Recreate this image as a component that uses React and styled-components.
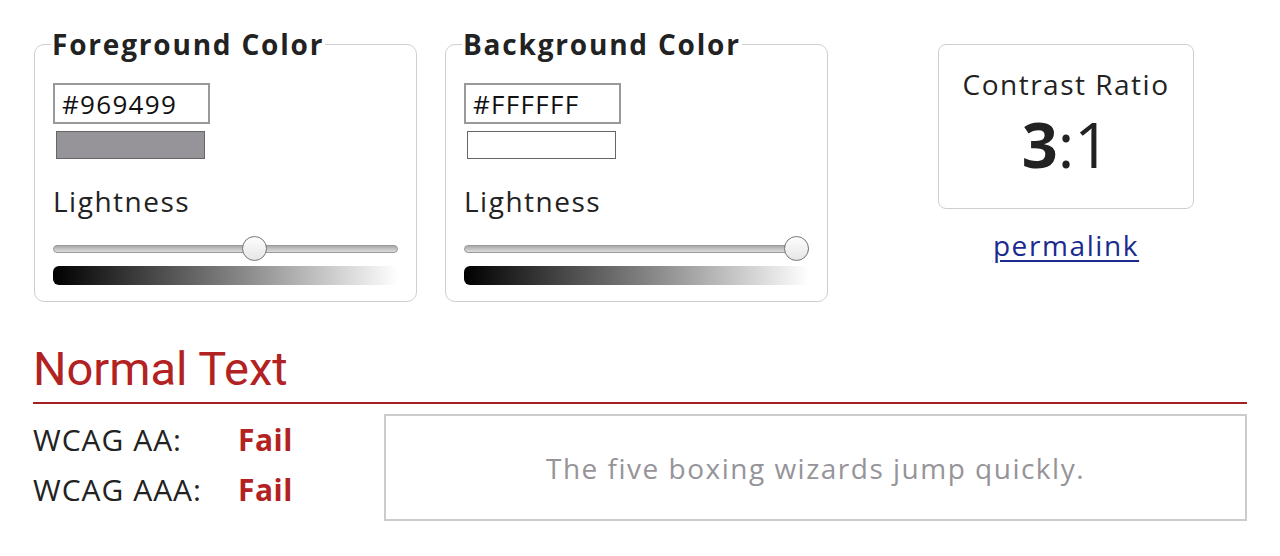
import React from "react";
import styled, { createGlobalStyle } from "styled-components";

const Global = createGlobalStyle`
  html, body { margin: 0; padding: 0; background: #fff; }
  body { font-family: "Open Sans", "Liberation Sans", sans-serif; color: #222; }
`;

const Page = styled.div`
  padding: 26px 33px 0 33px;
  width: 1280px;
  box-sizing: border-box;
`;

const Top = styled.div`
  display: flex;
  align-items: flex-start;
`;

const Panel = styled.fieldset`
  margin: 0 ${(p) => p.$gap || 0}px 0 1px;
  width: 383px;
  box-sizing: border-box;
  border: 1.5px solid #cfcfcf;
  border-radius: 10px;
  padding: 0 18px 16px 18px;
  min-width: 0;
`;

const Legend = styled.legend`
  font-size: 28px;
  font-weight: 700;
  letter-spacing: 1.8px;
  line-height: 36px;
  padding: 0 1px;
  margin-left: -2px;
  color: #222;
`;

const HexInput = styled.input`
  display: block;
  margin-top: 21px;
  width: 157px;
  height: 41px;
  box-sizing: border-box;
  border: 2px solid #999;
  padding: 0 0 0 7px;
  font-family: "Open Sans", "Liberation Sans", sans-serif;
  font-size: 26px;
  letter-spacing: 1.3px;
  color: #111;
  background: #fff;
  outline: none;
`;

const Swatch = styled.div`
  margin: 7px 0 0 3px;
  width: 149px;
  height: 28px;
  box-sizing: border-box;
  border: 1px solid #666;
  background: ${(p) => p.$color};
`;

const Label = styled.div`
  margin-top: 23px;
  font-size: 28px;
  letter-spacing: 1.5px;
  line-height: 38px;
  color: #222;
`;

const SliderWrap = styled.div`
  position: relative;
  margin-top: 16px;
  height: 25px;
  display: flex;
  align-items: center;
`;

const Track = styled.div`
  width: 100%;
  height: 8px;
  box-sizing: border-box;
  border-radius: 4px;
  border: 1px solid #999;
  background: linear-gradient(#aaa, #ddd);
`;

const Thumb = styled.div`
  position: absolute;
  top: 0;
  width: 25px;
  height: 25px;
  box-sizing: border-box;
  margin-left: -12.5px;
  border-radius: 50%;
  border: 1.5px solid #777;
  background: linear-gradient(#fdfdfd, #e6e6e6);
`;

const GradientBar = styled.div`
  margin-top: 5px;
  height: 19px;
  border-radius: 6px 0 0 6px;
  background: linear-gradient(to right, #000, #888 55%, #fff);
`;

const RatioCol = styled.div`
  margin-left: 110px;
  display: flex;
  flex-direction: column;
  align-items: center;
  padding-top: 18px;
`;

const RatioBox = styled.div`
  width: 256px;
  height: 165px;
  box-sizing: border-box;
  border: 1.5px solid #cfcfcf;
  border-radius: 8px;
  text-align: center;
  padding-top: 19px;
`;

const RatioTitle = styled.div`
  font-size: 28px;
  letter-spacing: 1.5px;
  line-height: 40px;
  color: #222;
`;

const RatioValue = styled.div`
  font-size: 63px;
  line-height: 80px;
  color: #222;
  b { font-weight: 700; }
`;

const Permalink = styled.a`
  margin-top: 17px;
  font-size: 28px;
  letter-spacing: 1.6px;
  line-height: 38px;
  color: #1a2a8f;
  text-decoration: underline;
  text-decoration-thickness: 2px;
  text-underline-offset: 4px;
`;

const Heading = styled.h2`
  margin: 38px 0 0 0;
  font-family: Roboto, "Open Sans", sans-serif;
  font-weight: 400;
  font-size: 47px;
  line-height: 58px;
  color: #b22222;
  border-bottom: 2px solid #a52024;
  padding-bottom: 4px;
`;

const Results = styled.div`
  display: flex;
  margin-top: 10px;
  align-items: flex-start;
`;

const Rows = styled.div`
  width: 351px;
  display: flex;
  flex-direction: column;
  padding-top: 1px;
`;

const Row = styled.div`
  display: flex;
  font-size: 30px;
  letter-spacing: 1px;
  line-height: 50px;
  color: #222;
`;

const RowLabel = styled.span`
  width: 205px;
`;

const Verdict = styled.span`
  font-weight: 700;
  letter-spacing: 0.5px;
  color: #b22222;
`;

const Sample = styled.div`
  flex: 1;
  height: 107px;
  box-sizing: border-box;
  border: 2px solid #cccccc;
  display: flex;
  align-items: center;
  justify-content: center;
  font-size: 28px;
  letter-spacing: 1.5px;
  color: ${(p) => p.$fg};
  background: ${(p) => p.$bg};
`;

function ColorPanel({ title, hex, value, gap }) {
  return (
    <Panel $gap={gap}>
      <Legend>{title}</Legend>
      <HexInput defaultValue={hex} />
      <Swatch $color={hex} />
      <Label>Lightness</Label>
      <SliderWrap>
        <Track />
        <Thumb style={{ left: `${value}%` }} />
      </SliderWrap>
      <GradientBar />
    </Panel>
  );
}

export default function App() {
  return (
    <>
      <Global />
      <Page>
        <Top>
          <ColorPanel title="Foreground Color" hex="#969499" value={58.5} gap={27} />
          <ColorPanel title="Background Color" hex="#FFFFFF" value={96.5} />
          <RatioCol>
            <RatioBox>
              <RatioTitle>Contrast Ratio</RatioTitle>
              <RatioValue>
                <b>3</b>:1
              </RatioValue>
            </RatioBox>
            <Permalink href="#">permalink</Permalink>
          </RatioCol>
        </Top>
        <Heading>Normal Text</Heading>
        <Results>
          <Rows>
            <Row>
              <RowLabel>WCAG AA:</RowLabel>
              <Verdict>Fail</Verdict>
            </Row>
            <Row>
              <RowLabel>WCAG AAA:</RowLabel>
              <Verdict>Fail</Verdict>
            </Row>
          </Rows>
          <Sample $fg="#969499" $bg="#FFFFFF">
            The five boxing wizards jump quickly.
          </Sample>
        </Results>
      </Page>
    </>
  );
}
